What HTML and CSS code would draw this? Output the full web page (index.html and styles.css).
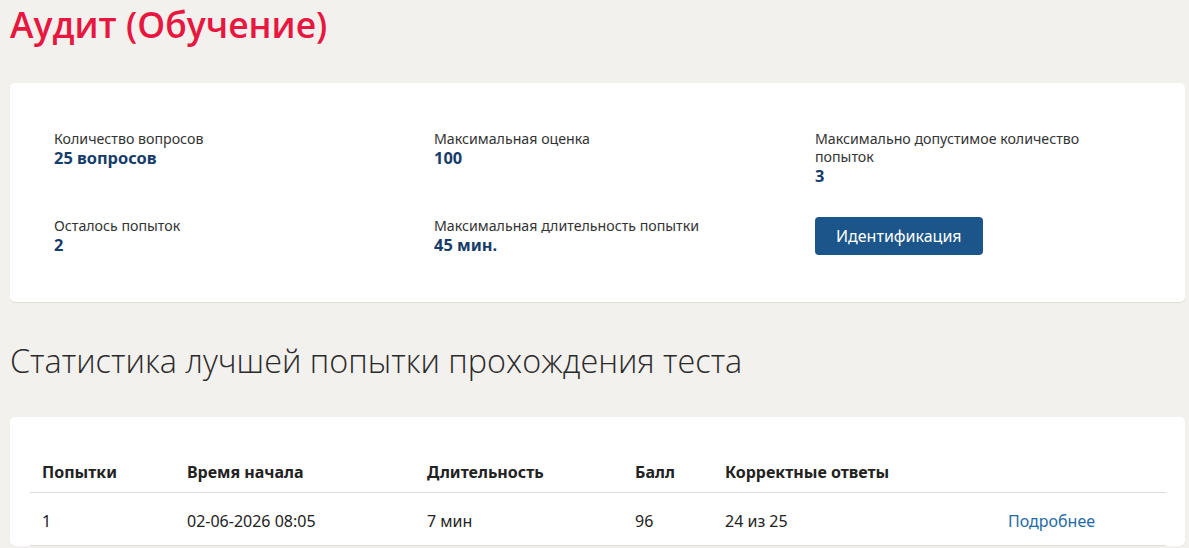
FILE: index.html
```html
<!DOCTYPE html>
<html lang="ru">
<head>
<meta charset="utf-8">
<title>Аудит (Обучение)</title>
<link rel="stylesheet" href="styles.css">
</head>
<body>
<main class="page">
  <h1 class="title">Аудит (Обучение)</h1>

  <section class="card info-card">
    <div class="info-grid">
      <div class="info-item">
        <div class="info-label">Количество вопросов</div>
        <div class="info-value">25 вопросов</div>
      </div>
      <div class="info-item">
        <div class="info-label">Максимальная оценка</div>
        <div class="info-value">100</div>
      </div>
      <div class="info-item">
        <div class="info-label">Максимально допустимое количество попыток</div>
        <div class="info-value">3</div>
      </div>
      <div class="info-item">
        <div class="info-label">Осталось попыток</div>
        <div class="info-value">2</div>
      </div>
      <div class="info-item">
        <div class="info-label">Максимальная длительность попытки</div>
        <div class="info-value">45 мин.</div>
      </div>
      <div class="info-item">
        <button class="btn-primary" type="button">Идентификация</button>
      </div>
    </div>
  </section>

  <h2 class="section-title">Статистика лучшей попытки прохождения теста</h2>

  <section class="card table-card">
    <table class="stats-table">
      <thead>
        <tr>
          <th class="c1">Попытки</th>
          <th class="c2">Время начала</th>
          <th class="c3">Длительность</th>
          <th class="c4">Балл</th>
          <th class="c5">Корректные ответы</th>
          <th class="c6"></th>
        </tr>
      </thead>
      <tbody>
        <tr>
          <td>1</td>
          <td>02-06-2026 08:05</td>
          <td>7 мин</td>
          <td>96</td>
          <td>24 из 25</td>
          <td><a class="link" href="#">Подробнее</a></td>
        </tr>
      </tbody>
    </table>
  </section>
</main>
</body>
</html>
```

FILE: styles.css
```css
* { box-sizing: border-box; }

html, body {
  margin: 0;
  padding: 0;
  background: #f2f1ee;
}

body {
  font-family: "Noto Sans", "Open Sans", "Liberation Sans", sans-serif;
  color: #222;
}

.page {
  padding: 0 4px 0 10px;
}

.title {
  margin: 0;
  padding-top: 1px;
  font-family: "Open Sans", "Noto Sans", sans-serif;
  font-size: 35.5px;
  font-weight: 600;
  line-height: 46px;
  color: #e8173f;
  letter-spacing: 0;
}

.card {
  background: #fff;
  border-radius: 5px;
  box-shadow: 0 1px 1px #e0ddd8;
}

.info-card {
  margin-top: 36px;
  padding: 47px 44px 47px 44px;
}

.info-grid {
  display: grid;
  grid-template-columns: 380px 381px 1fr;
  row-gap: 31px;
}

.info-item {
  padding-right: 40px;
}

.info-label {
  font-size: 14.2px;
  line-height: 18px;
  color: #333;
}

.info-value {
  font-size: 16.4px;
  line-height: 20px;
  font-weight: 700;
  color: #163d6a;
}

.btn-primary {
  font-family: inherit;
  font-size: 16px;
  color: #fff;
  background: #1b558a;
  border: 0;
  border-radius: 4px;
  height: 38px;
  padding: 0 21px;
  cursor: pointer;
}

.section-title {
  margin: 0;
  padding: 36px 0 35px;
  font-family: "Open Sans", sans-serif;
  font-weight: 300;
  font-size: 32.4px;
  line-height: 44px;
  color: #2a2a2a;
}

.table-card {
  padding: 36px 19px 0 20px;
}

.stats-table {
  width: 100%;
  border-collapse: collapse;
  font-size: 16px;
  color: #222;
}

.stats-table th {
  text-align: left;
  font-weight: 700;
  padding: 8px 12px 9px;
  line-height: 22px;
  border-bottom: 1px solid #dedcd8;
}

.stats-table td {
  padding: 17px 12px 13px;
  line-height: 22px;
  border-bottom: 1px solid #dedcd8;
}

.c1 { width: 145px; }
.c2 { width: 240px; }
.c3 { width: 208px; }
.c4 { width: 90px; }
.c5 { width: 283px; }

.link {
  color: #1f6aa5;
  text-decoration: none;
}
```
